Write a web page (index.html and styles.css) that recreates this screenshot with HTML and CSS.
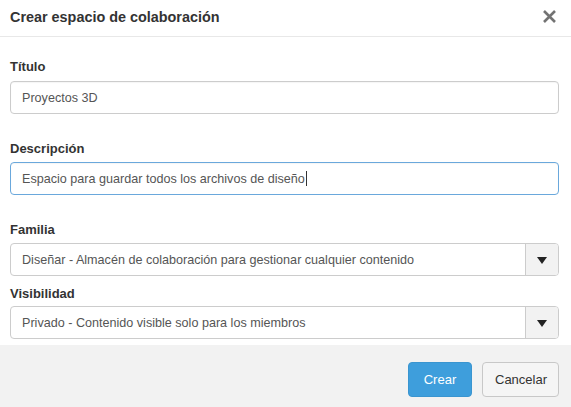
FILE: index.html
```html
<!DOCTYPE html>
<html lang="es">
<head>
<meta charset="utf-8">
<title>Crear espacio de colaboración</title>
<link rel="stylesheet" href="styles.css">
</head>
<body>
<div class="dialog">
  <div class="header">
    <h1 class="title">Crear espacio de colaboración</h1>
    <button class="close" aria-label="Cerrar">
      <svg width="15" height="15" viewBox="0 0 15 15"><path d="M2 2 L13 13 M13 2 L2 13" stroke="#737373" stroke-width="2.6" stroke-linecap="butt"/></svg>
    </button>
  </div>
  <div class="content">
    <div class="group g-titulo">
      <label class="label">Título</label>
      <div class="field">Proyectos 3D</div>
    </div>
    <div class="group g-desc">
      <label class="label">Descripción</label>
      <div class="field focused">Espacio para guardar todos los archivos de diseño<span class="caret"></span></div>
    </div>
    <div class="group g-familia">
      <label class="label">Familia</label>
      <div class="select">
        <div class="select-text">Diseñar - Almacén de colaboración para gestionar cualquier contenido</div>
        <div class="select-btn"><span class="tri"></span></div>
      </div>
    </div>
    <div class="group g-vis">
      <label class="label">Visibilidad</label>
      <div class="select">
        <div class="select-text">Privado - Contenido visible solo para los miembros</div>
        <div class="select-btn"><span class="tri"></span></div>
      </div>
    </div>
  </div>
  <div class="footer">
    <button class="btn btn-primary">Crear</button>
    <button class="btn btn-default">Cancelar</button>
  </div>
</div>
</body>
</html>
```
FILE: styles.css
```css
* { box-sizing: border-box; }
html, body { margin: 0; padding: 0; background: #fff; }
body {
  font-family: "Liberation Sans", Arial, sans-serif;
  font-size: 13px;
  color: #333;
  width: 571px;
  height: 407px;
  overflow: hidden;
}
.dialog { display: flex; flex-direction: column; height: 407px; }
.header {
  height: 37px;
  border-bottom: 1px solid #e8e8e8;
  display: flex;
  align-items: center;
  justify-content: space-between;
  padding: 0 14px 0 10px;
}
.title {
  margin: 0;
  font-size: 14.4px;
  font-weight: bold;
  color: #333;
  line-height: 16px;
  padding-bottom: 3px;
}
.close {
  border: 0;
  background: none;
  padding: 0;
  width: 15px;
  height: 15px;
  display: flex;
  margin-bottom: 4px;
}
.content { padding: 0 12px 0 10px; flex: 1; }
.group { display: flex; flex-direction: column; }
.label {
  font-weight: bold;
  font-size: 13px;
  line-height: 16px;
  color: #333;
  margin-bottom: 6px;
}
.g-titulo { margin-top: 22px; }
.g-desc { margin-top: 27px; }
.g-desc .label { margin-bottom: 5px; }
.g-familia { margin-top: 27px; }
.g-familia .label { margin-bottom: 5px; }
.g-vis { margin-top: 10px; }
.g-vis .label { margin-bottom: 4px; }
.field {
  height: 33px;
  border: 1px solid #ccc;
  border-radius: 4px;
  padding: 0 11px;
  display: flex;
  align-items: center;
  color: #555;
  font-size: 12.6px;
  box-shadow: inset 0 1px 1px rgba(0,0,0,0.04);
}
.field.focused { border-color: #6aa8dc; }
.caret {
  display: inline-block;
  width: 1px;
  height: 15px;
  background: #333;
  margin-left: 1px;
}
.select {
  height: 33px;
  border: 1px solid #ccc;
  border-radius: 4px;
  display: flex;
  overflow: hidden;
}
.select-text {
  flex: 1;
  padding: 0 11px;
  display: flex;
  align-items: center;
  color: #555;
  font-size: 12.6px;
}
.select-btn {
  width: 33px;
  background: #f2f2f2;
  border-left: 1px solid #ccc;
  display: flex;
  align-items: center;
  justify-content: center;
}
.tri {
  width: 0; height: 0;
  border-left: 5px solid transparent;
  border-right: 5px solid transparent;
  border-top: 7px solid #222;
  margin-top: 1px;
}
.footer {
  height: 62px;
  background: #f2f2f2;
  display: flex;
  justify-content: flex-end;
  align-items: flex-start;
  padding: 17px 12px 0 0;
  gap: 10px;
}
.btn {
  font-family: "Liberation Sans", Arial, sans-serif;
  font-size: 13px;
  height: 35px;
  border-radius: 4px;
  padding: 0 12px;
  cursor: pointer;
}
.btn-primary {
  width: 64px;
  background: #3e9edc;
  border: 1px solid #3a95d0;
  color: #fff;
}
.btn-default {
  width: 77px;
  background: #f5f5f5;
  border: 1px solid #c8c8c8;
  color: #333;
}
```
